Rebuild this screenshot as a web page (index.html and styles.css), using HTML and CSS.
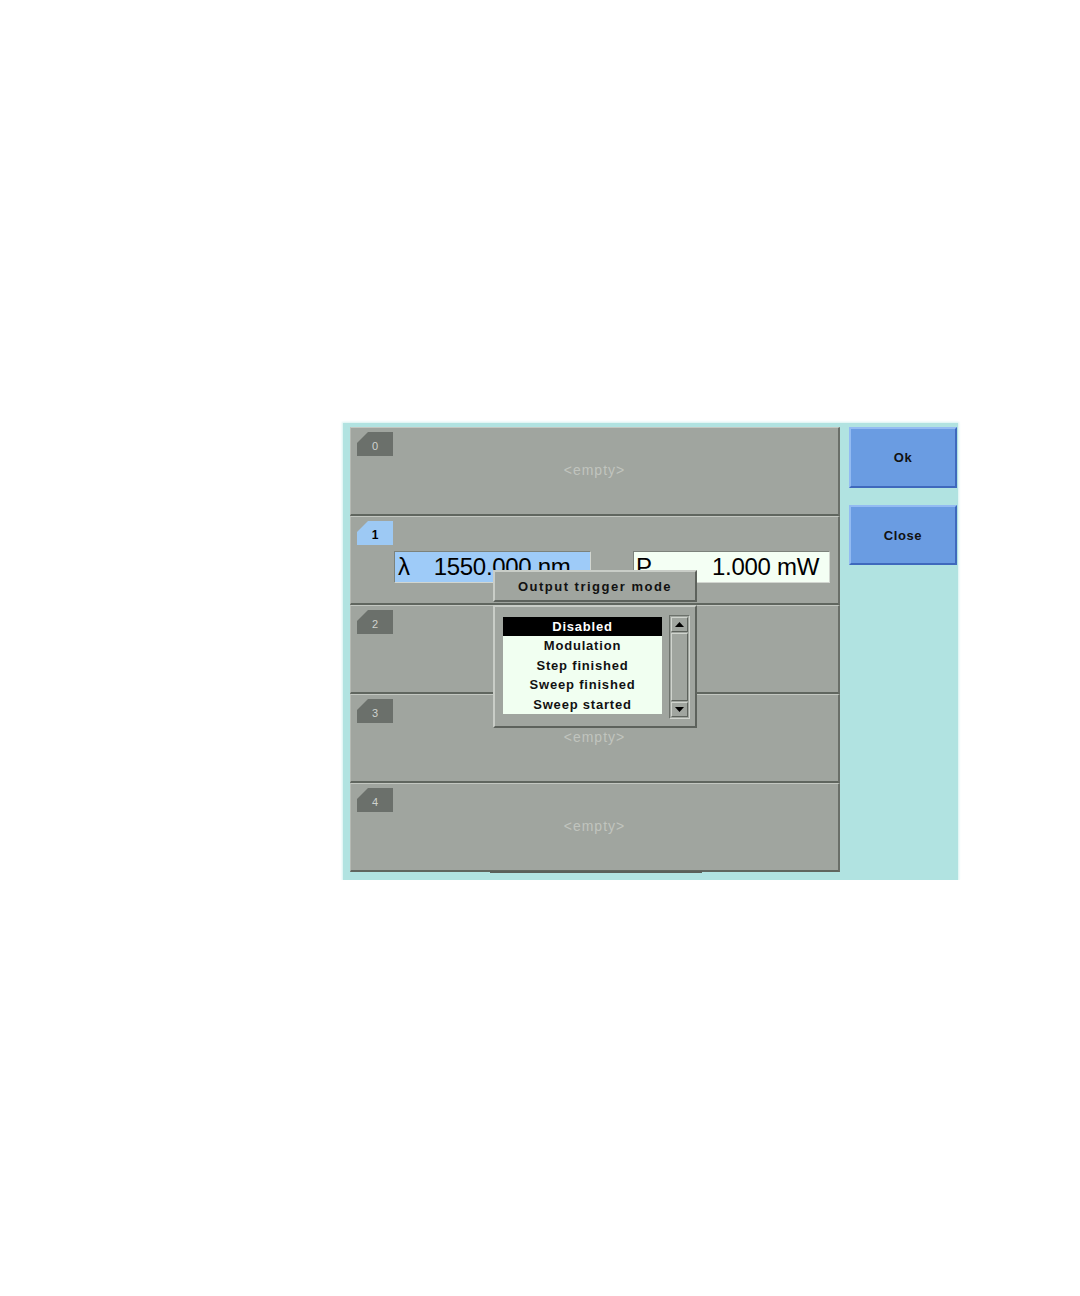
FILE: index.html
```html
<!DOCTYPE html>
<html>
<head>
<meta charset="utf-8">
<link rel="stylesheet" href="styles.css">
</head>
<body>
<div class="page">
  <div class="screen">
    <div class="rows">
      <div class="row">
        <div class="tab"><span class="tabnum">0</span></div>
        <div class="empty">&lt;empty&gt;</div>
      </div>
      <div class="row">
        <div class="tab active"><span class="tabnum">1</span></div>
        <div class="fields">
          <div class="field lambda"><span class="sym">λ</span><span class="val">1550.000 nm</span></div>
          <div class="field power"><span class="sym">P</span><span class="val">1.000 mW</span></div>
        </div>
      </div>
      <div class="row">
        <div class="tab"><span class="tabnum">2</span></div>
      </div>
      <div class="row">
        <div class="tab"><span class="tabnum">3</span></div>
        <div class="empty">&lt;empty&gt;</div>
      </div>
      <div class="row">
        <div class="tab"><span class="tabnum">4</span></div>
        <div class="empty">&lt;empty&gt;</div>
      </div>
    </div>
    <div class="buttons">
      <div class="btn ok">Ok</div>
      <div class="btn close">Close</div>
    </div>

    <div class="shadowbar"></div>

    <div class="popup">
      <div class="popup-title">Output trigger mode</div>
      <div class="popup-panel">
        <div class="list">
          <div class="item selected">Disabled</div>
          <div class="item">Modulation</div>
          <div class="item">Step finished</div>
          <div class="item">Sweep finished</div>
          <div class="item">Sweep started</div>
        </div>
        <div class="scrollbar">
          <div class="sbtn"><svg width="9" height="5" viewBox="0 0 9 5"><polygon points="4.5,0 9,5 0,5" fill="#000"/></svg></div>
          <div class="track"></div>
          <div class="sbtn"><svg width="9" height="5" viewBox="0 0 9 5"><polygon points="0,0 9,0 4.5,5" fill="#000"/></svg></div>
        </div>
      </div>
    </div>
  </div>
</div>
</body>
</html>
```

FILE: styles.css
```css
html, body {
  margin: 0;
  padding: 0;
  background: #ffffff;
}

.page {
  padding: 423px 0 0 343px;
  font-family: "Liberation Sans", Arial, sans-serif;
}

.screen {
  position: relative;
  width: 615px;
  height: 457px;
  box-sizing: border-box;
  padding: 4px 0 0 7px;
  background: #b1e3e1;
  display: flex;
  gap: 9px;
  box-shadow: 0 0 2px 1px #d6f2f1;
}

.rows {
  width: 490px;
  display: flex;
  flex-direction: column;
}

.row {
  height: 89px;
  box-sizing: border-box;
  background: #a0a59f;
  border-top: 1px solid #c3c7c1;
  border-left: 1px solid #b5b9b3;
  border-bottom: 2px solid #60665f;
  border-right: 2px solid #6a6f69;
  padding: 4px 0 0 6px;
  display: flex;
  flex-direction: column;
}

.tab {
  width: 36px;
  height: 24px;
  background: #6b706b;
  clip-path: polygon(11px 0, 100% 0, 100% 100%, 0 100%, 0 11px);
  display: flex;
  align-items: center;
  justify-content: center;
  padding-top: 3px;
  box-sizing: border-box;
}

.tabnum {
  font-size: 11px;
  color: #cfd2ce;
  font-family: "Liberation Sans", Arial, sans-serif;
}

.tab.active {
  background: #9dc9f4;
}

.tab.active .tabnum {
  color: #000;
  font-weight: bold;
  font-size: 12px;
}

.empty {
  margin-top: 6px;
  margin-left: -6px;
  text-align: center;
  font-size: 14px;
  line-height: 16px;
  color: #c0c4be;
  letter-spacing: 1px;
}

.fields {
  display: flex;
  gap: 42px;
  margin-top: 6px;
  padding-left: 37px;
}

.field {
  width: 197px;
  height: 32px;
  box-sizing: border-box;
  border-top: 1px solid #7c827b;
  border-left: 1px solid #7c827b;
  border-bottom: 1px solid #d2d6d0;
  border-right: 1px solid #d2d6d0;
  display: flex;
  align-items: center;
  font-size: 24px;
  line-height: 28px;
  color: #000;
  letter-spacing: -0.3px;
}

.lambda {
  background: #9ecbf8;
  padding-left: 3px;
}

.lambda .val {
  margin-left: 24px;
}

.power {
  background: #f4fff4;
  padding: 0 10px 0 2px;
  justify-content: space-between;
}

.buttons {
  width: 108px;
  display: flex;
  flex-direction: column;
  gap: 17px;
}

.btn {
  box-sizing: border-box;
  background: #6a9ce2;
  border-top: 2px solid #93bbf2;
  border-left: 2px solid #93bbf2;
  border-bottom: 2px solid #3f69bd;
  border-right: 2px solid #3f69bd;
  display: flex;
  align-items: center;
  justify-content: center;
  font-size: 13px;
  font-weight: bold;
  letter-spacing: 0.6px;
  color: #111;
}

.ok {
  height: 61px;
}

.close {
  height: 60px;
}

.shadowbar {
  position: absolute;
  left: 147px;
  top: 448px;
  width: 212px;
  height: 2px;
  background: #5a5f59;
}

.popup {
  position: absolute;
  left: 150px;
  top: 147px;
  width: 204px;
  display: flex;
  flex-direction: column;
  gap: 3px;
}

.popup-title {
  height: 32px;
  box-sizing: border-box;
  background: #a0a59f;
  border-top: 2px solid #c9cdc7;
  border-left: 2px solid #c9cdc7;
  border-bottom: 2px solid #5d625c;
  border-right: 2px solid #5d625c;
  display: flex;
  align-items: center;
  justify-content: center;
  font-size: 13px;
  font-weight: bold;
  letter-spacing: 1.5px;
  color: #111;
}

.popup-panel {
  height: 123px;
  box-sizing: border-box;
  background: #a0a59f;
  border-top: 2px solid #c9cdc7;
  border-left: 2px solid #c9cdc7;
  border-bottom: 2px solid #5d625c;
  border-right: 2px solid #5d625c;
  padding: 8px 0 0 8px;
  display: flex;
  align-items: flex-start;
  gap: 7px;
}

.list {
  width: 159px;
  height: 97px;
  margin-top: 2px;
  background: #f1fff1;
  display: flex;
  flex-direction: column;
}

.item {
  height: 19.4px;
  line-height: 20px;
  text-align: center;
  font-size: 13px;
  font-weight: bold;
  letter-spacing: 0.8px;
  color: #111;
}

.item.selected {
  background: #000;
  color: #fff;
}

.scrollbar {
  width: 21px;
  height: 104px;
  box-sizing: border-box;
  border-top: 1px solid #6c716b;
  border-left: 1px solid #6c716b;
  border-bottom: 1px solid #d0d4ce;
  border-right: 1px solid #d0d4ce;
  padding: 1px;
  display: flex;
  flex-direction: column;
  gap: 1px;
}

.sbtn {
  height: 15px;
  box-sizing: border-box;
  border-top: 1px solid #d0d4ce;
  border-left: 1px solid #d0d4ce;
  border-bottom: 1px solid #5d625c;
  border-right: 1px solid #5d625c;
  display: flex;
  align-items: center;
  justify-content: center;
}

.track {
  flex: 1;
  box-sizing: border-box;
  border-top: 1px solid #d0d4ce;
  border-left: 1px solid #d0d4ce;
  border-bottom: 1px solid #5d625c;
  border-right: 1px solid #5d625c;
}
```
